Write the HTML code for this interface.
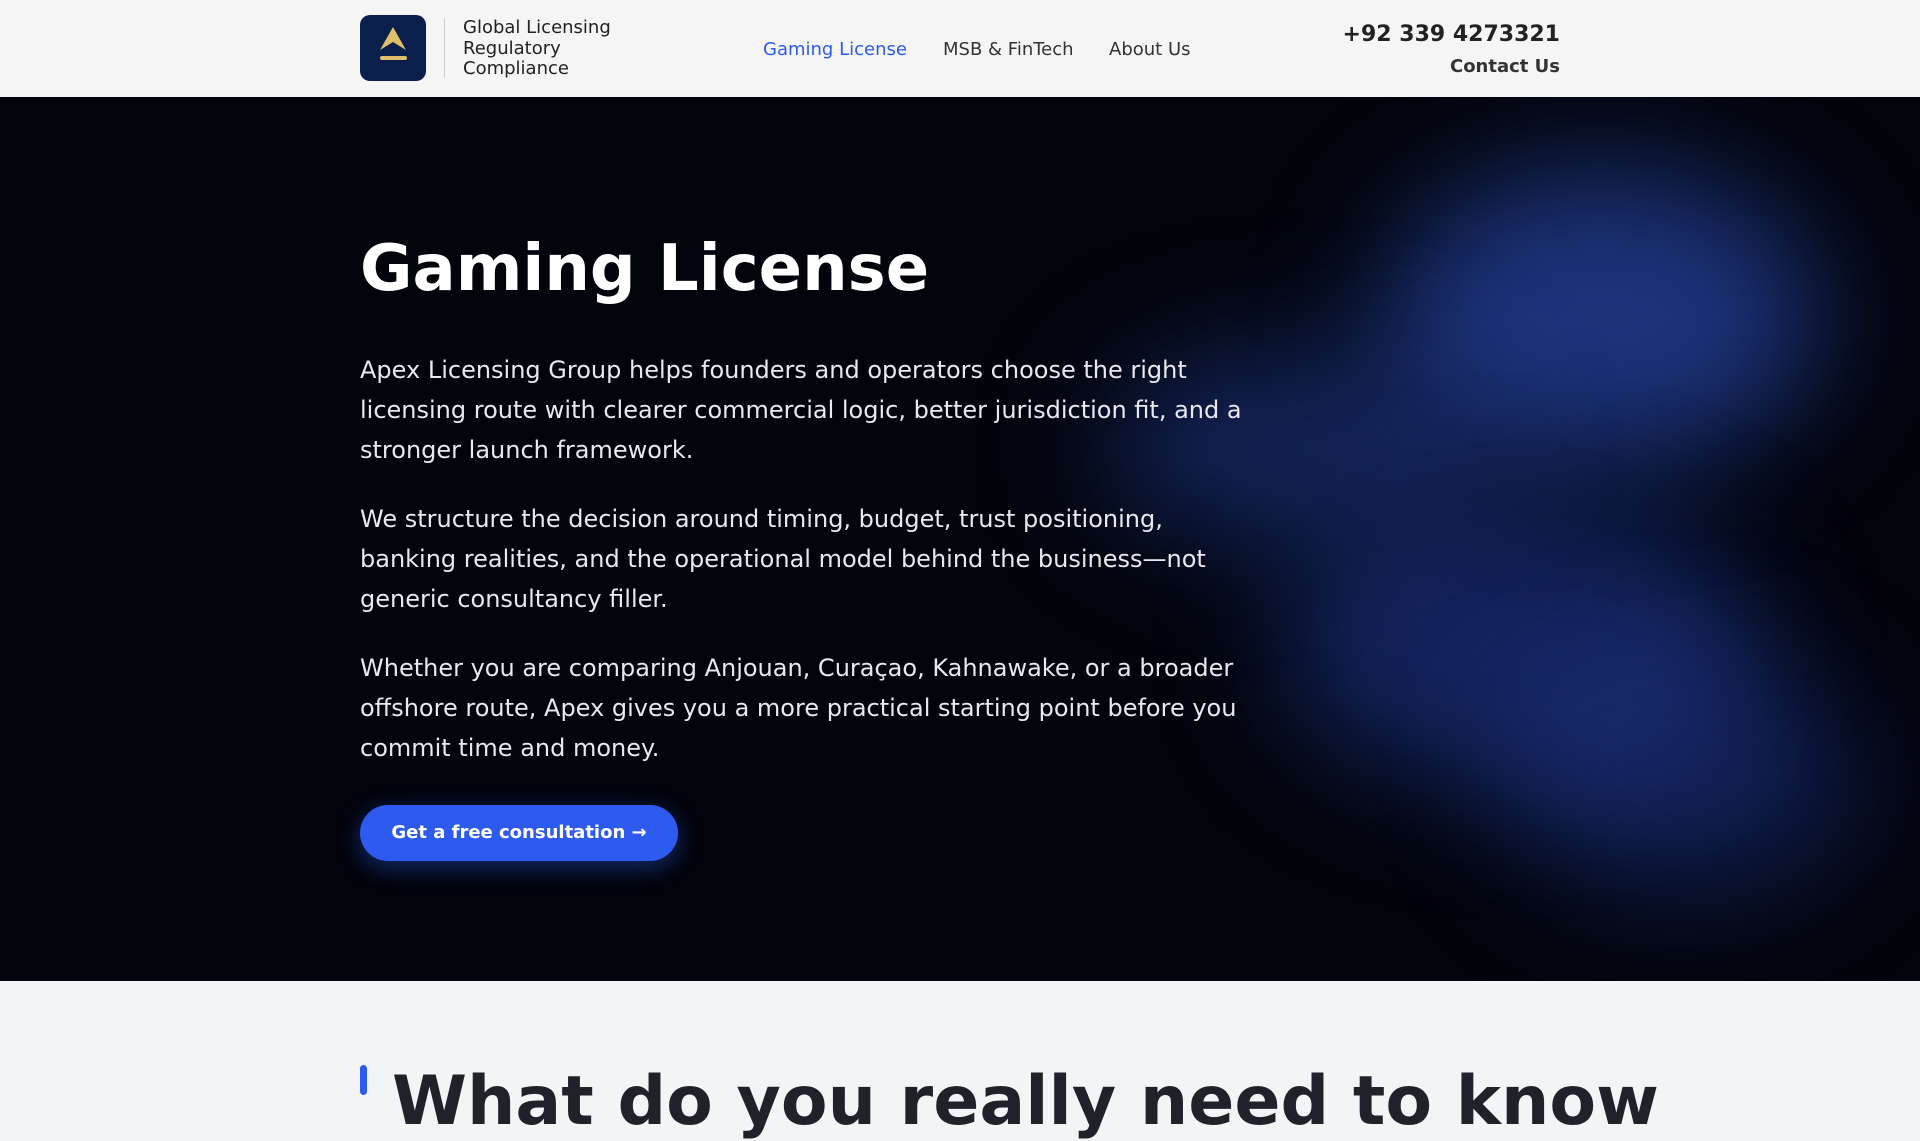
<!DOCTYPE html>
<html><head><meta charset="utf-8"><style>
*{margin:0;padding:0;box-sizing:border-box}
body{width:1920px;height:1080px;overflow:hidden;font-family:"DejaVu Sans","Liberation Sans",sans-serif;background:#f3f4f6}
header{height:97px;background:#f5f5f5;position:relative}
.logo{position:absolute;left:360px;top:15px;width:66px;height:66px;border-radius:10px;background:#0b1f4d}
.div{position:absolute;left:444px;top:18px;width:1px;height:60px;background:#ccc}
.ltxt{position:absolute;left:463px;top:18px;font-size:18px;line-height:20.5px;color:#222}
nav a{position:absolute;top:39px;font-size:18px;color:#333;text-decoration:none}
.ph{position:absolute;right:360px;top:22px;font-size:22px;font-weight:bold;color:#222}
.cu{position:absolute;right:360px;top:56px;font-size:18px;font-weight:bold;color:#333}
.hero{position:absolute;top:97px;left:0;width:1920px;height:884px;background:#02040b;overflow:hidden}
.g{position:absolute;border-radius:50%;filter:blur(60px)}
h1{position:absolute;left:360px;top:135px;font-size:64px;font-weight:bold;color:#fff}
.ps{position:absolute;left:360px;top:253px;width:890px;color:#e8e8ee;font-size:24px;line-height:40px}
.ps p{margin-bottom:29px}
.btn{position:absolute;left:360px;top:708px;width:318px;height:56px;border-radius:28px;background:#2d5bef;color:#fff;font-weight:bold;font-size:18px;line-height:56px;text-align:center;box-shadow:0 6px 24px rgba(45,91,239,.45)}
.bar{position:absolute;left:360px;top:1065px;width:7px;height:30px;border-radius:4px;background:#2d5bef}
.h2{position:absolute;left:392px;top:1062px;font-size:68px;font-weight:bold;color:#1f2229}
</style></head><body>
<header>
<div class="logo"><svg width="66" height="66" viewBox="0 0 66 66"><path d="M20 35 L33 12 L46 35 L33 27 Z" fill="#e0bf6a"/><rect x="20" y="41" width="27" height="4" rx="2" fill="#e0bf6a"/></svg></div>
<div class="div"></div>
<div class="ltxt">Global Licensing<br>Regulatory<br>Compliance</div>
<nav><a style="left:763px;color:#2d5bef">Gaming License</a><a style="left:943px">MSB &amp; FinTech</a><a style="left:1109px">About Us</a></nav>
<div class="ph">+92 339 4273321</div>
<div class="cu">Contact Us</div>
</header>
<div class="hero">
<div class="g" style="left:1380px;top:70px;width:440px;height:300px;background:rgba(40,70,170,.7)"></div>
<div class="g" style="left:1100px;top:250px;width:400px;height:200px;background:rgba(35,60,150,.55)"></div>
<div class="g" style="left:1280px;top:410px;width:480px;height:280px;background:rgba(35,60,160,.55)"></div>
<div class="g" style="left:1500px;top:560px;width:360px;height:240px;background:rgba(35,60,160,.45)"></div>
<h1>Gaming License</h1>
<div class="ps">
<p>Apex Licensing Group helps founders and operators choose the right licensing route with clearer commercial logic, better jurisdiction fit, and a stronger launch framework.</p>
<p>We structure the decision around timing, budget, trust positioning, banking realities, and the operational model behind the business—not generic consultancy filler.</p>
<p>Whether you are comparing Anjouan, Curaçao, Kahnawake, or a broader offshore route, Apex gives you a more practical starting point before you commit time and money.</p>
</div>
<div class="btn">Get a free consultation →</div>
</div>
<div class="bar"></div>
<div class="h2">What do you really need to know</div>
</body></html>
